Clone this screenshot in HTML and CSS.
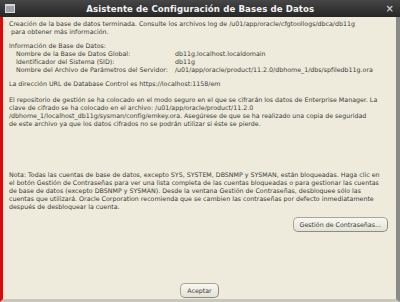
FILE: index.html
```html
<!DOCTYPE html>
<html lang="es">
<head>
    <meta charset="UTF-8">
    <title>Asistente de Configuración de Bases de Datos</title>
    <link rel="stylesheet" href="styles.css">
</head>
<body>
    <div class="window">
        <div class="titlebar">
            <span class="win-icon"></span>
            <span class="title">Asistente de Configuración de Bases de Datos</span>
            <span class="close">×</span>
        </div>
        <div class="frame">
            <div class="content">
                <p class="msg">Creación de la base de datos terminada. Consulte los archivos log de /u01/app/oracle/cfgtoollogs/dbca/db11g<br>&nbsp;para obtener más información.</p>

                <div class="info">
                    <div class="info-head">Información de Base de Datos:</div>
                    <div class="info-grid">
                        <span>Nombre de la Base de Datos Global:</span><span>db11g.localhost.localdomain</span>
                        <span>Identificador del Sistema (SID):</span><span>db11g</span>
                        <span>Nombre del Archivo de Parámetros del Servidor:</span><span>/u01/app/oracle/product/11.2.0/dbhome_1/dbs/spfiledb11g.ora</span>
                    </div>
                </div>

                <p class="url">La dirección URL de Database Control es https://localhost:1158/em</p>

                <p class="repo">El repositorio de gestión se ha colocado en el modo seguro en el que se cifrarán los datos de Enterprise Manager. La<br>clave de cifrado se ha colocado en el archivo: /u01/app/oracle/product/11.2.0<br>/dbhome_1/localhost_db11g/sysman/config/emkey.ora. Asegúrese de que se ha realizado una copia de seguridad<br>de este archivo ya que los datos cifrados no se podrán utilizar si éste se pierde.</p>

                <p class="note">Nota: Todas las cuentas de base de datos, excepto SYS, SYSTEM, DBSNMP y SYSMAN, están bloqueadas. Haga clic en<br>el botón Gestión de Contraseñas para ver una lista completa de las cuentas bloqueadas o para gestionar las cuentas<br>de base de datos (excepto DBSNMP y SYSMAN). Desde la ventana Gestión de Contraseñas, desbloquee sólo las<br>cuentas que utilizará. Oracle Corporation recomienda que se cambien las contraseñas por defecto inmediatamente<br>después de desbloquear la cuenta.</p>

                <div class="pw-row">
                    <button class="btn">Gestión de Contraseñas...</button>
                </div>
            </div>
            <div class="footer">
                <button class="btn">Aceptar</button>
            </div>
        </div>
    </div>
</body>
</html>
```

FILE: styles.css
```css
body {
    margin: 0;
    font-family: "DejaVu Sans", sans-serif;
    background-color: #eeebdc;
}

.window {
    width: 400px;
    height: 302px;
    display: flex;
    flex-direction: column;
    overflow: hidden;
}

.titlebar {
    height: 17px;
    flex-shrink: 0;
    display: flex;
    align-items: center;
    background: linear-gradient(#464646, #262626);
    color: #f2f2f2;
    padding: 0 6px 0 5px;
}

.win-icon {
    width: 8px;
    height: 6px;
    border: 1px solid #d8d8d8;
    border-top-width: 2px;
    background-color: #9ea3ab;
}

.title {
    flex: 1;
    text-align: center;
    font-size: 8.6px;
    font-weight: bold;
    letter-spacing: 0.1px;
}

.close {
    font-size: 10px;
    color: #c8c8c8;
    font-weight: bold;
}

.frame {
    height: 285px;
    display: flex;
    flex-direction: column;
    box-sizing: border-box;
    background-color: #eeebdc;
    border-left: 3px solid #d10f0f;
    border-right: 4px solid #8a8a84;
    border-bottom: 3px solid #c9c7bb;
}

.content {
    padding: 3px 8px 0 6px;
    font-size: 6.3px;
    line-height: 8px;
    color: #3b3b38;
}

p {
    margin: 0;
}

.info {
    margin-top: 6px;
}

.info-grid {
    display: grid;
    grid-template-columns: 159px auto;
    padding-left: 7px;
}

.url {
    margin-top: 6px;
}

.repo {
    margin-top: 8px;
}

.note {
    margin-top: 43px;
}

.pw-row {
    display: flex;
    justify-content: flex-end;
    margin-top: 6px;
}

.btn {
    font-family: "DejaVu Sans", sans-serif;
    font-size: 6.3px;
    color: #3b3b38;
    background: linear-gradient(#f8f7f1, #e4e2d6);
    border: 1px solid #a8a699;
    border-right-color: #8e8c80;
    border-bottom-color: #8e8c80;
    border-radius: 5px;
    padding: 3px 6px;
    line-height: 7px;
}

.footer {
    margin-top: auto;
    display: flex;
    justify-content: center;
    padding-bottom: 1px;
}
```
